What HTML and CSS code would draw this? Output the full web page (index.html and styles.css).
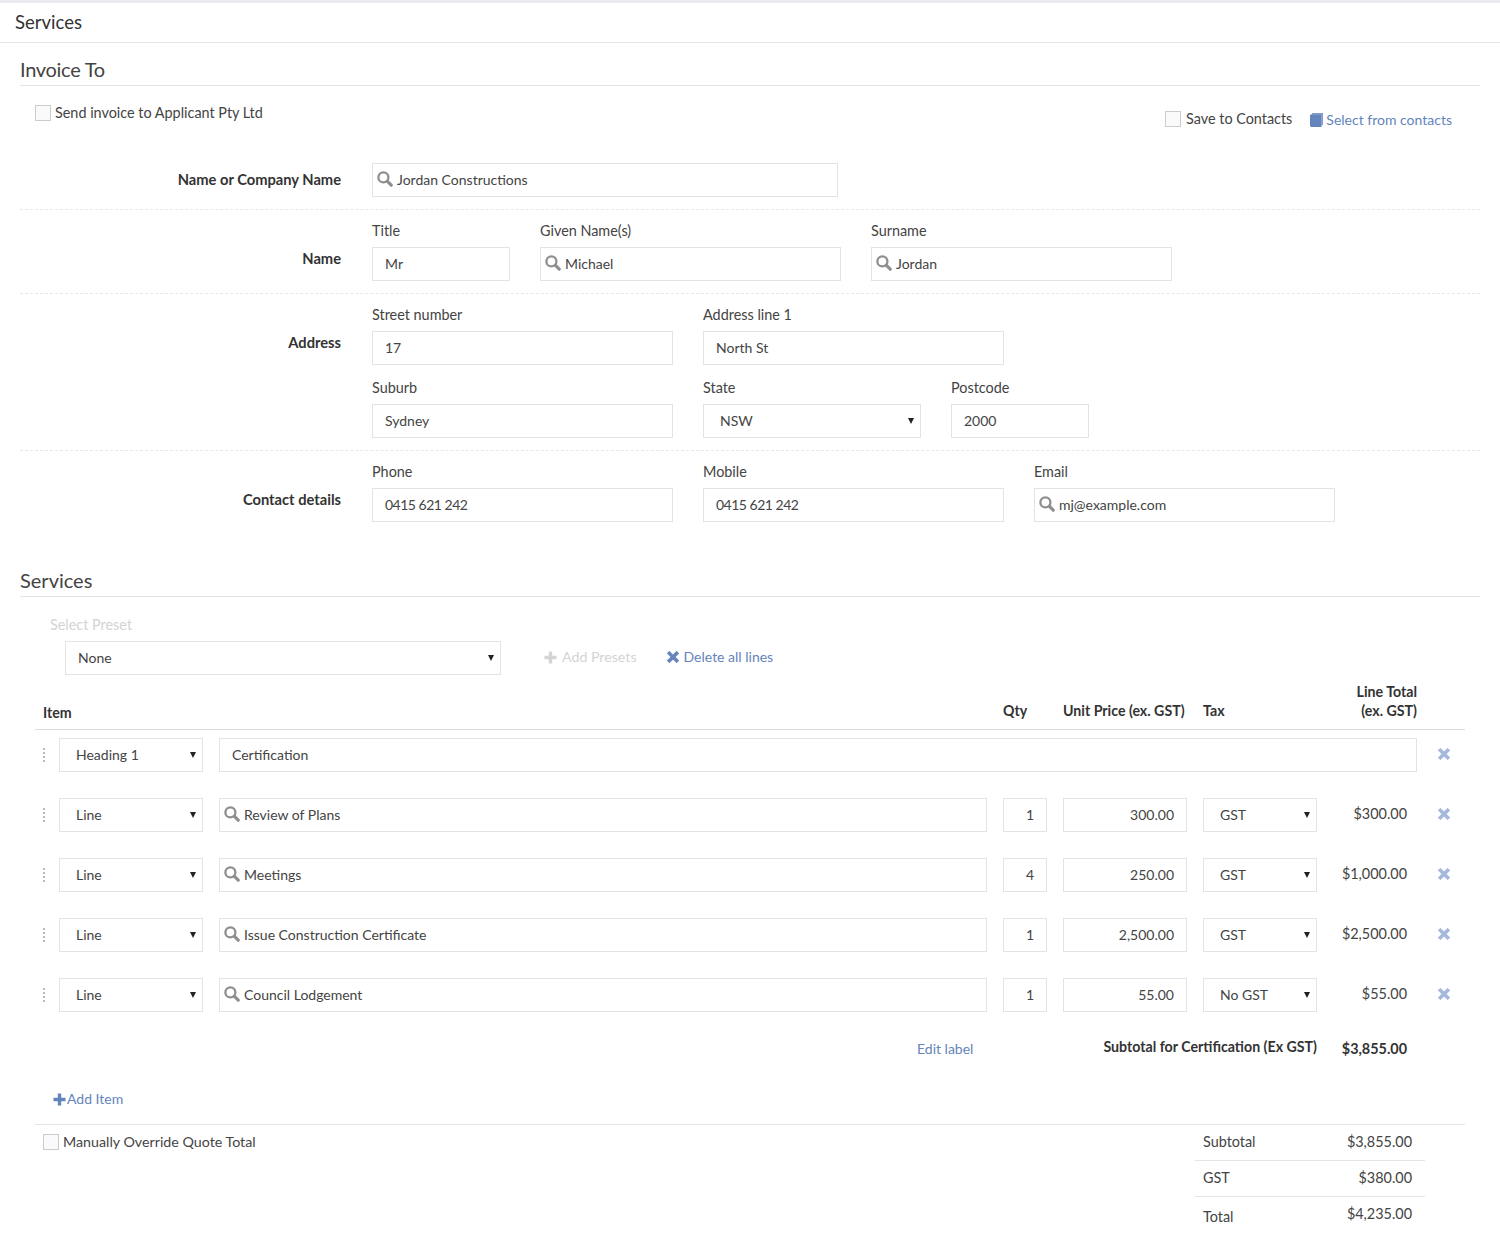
FILE: index.html
```html
<!DOCTYPE html>
<html lang="en">
<head>
<meta charset="utf-8">
<title>Services</title>
<link rel="stylesheet" href="styles.css">
</head>
<body>
<svg class="defs" width="0" height="0" aria-hidden="true">
  <symbol id="i-search" viewBox="0 0 16 16"><circle cx="6.4" cy="6.4" r="5" fill="none" stroke="currentColor" stroke-width="2.3"/><path d="M10.2 10.2 14.2 14.2" fill="none" stroke="currentColor" stroke-width="3.2" stroke-linecap="round"/></symbol>
  <symbol id="i-x" viewBox="0 0 12 12"><path d="M2.4 2.4 9.6 9.6M9.6 2.4 2.4 9.6" fill="none" stroke="currentColor" stroke-width="3.6" stroke-linecap="square"/></symbol>
  <symbol id="i-plus" viewBox="0 0 13 13"><path d="M6.5 0.5V12.5M0.5 6.5H12.5" fill="none" stroke="currentColor" stroke-width="3.4"/></symbol>
</svg>
<header class="page-title">Services</header>
<main class="content">
  <h2 class="section-title invoice">Invoice To</h2>
  <div class="options">
    <label class="check"><span class="box"></span>Send invoice to Applicant Pty Ltd</label>
    <div class="options-right">
      <label class="check roomy"><span class="box"></span>Save to Contacts</label>
      <a class="link contacts"><svg class="book" viewBox="0 0 13 14"><path d="M2 0H13V12H11.6V1.4H2Z" fill="#7f9bcb"/><path d="M0 2 1.6 1.2H11.6V14H1.4C.6 14 0 13.4 0 12.6Z" fill="#6484bc"/></svg>Select from contacts</a>
    </div>
  </div>

  <section class="form-row first">
    <div class="row-label">Name or Company Name</div>
    <div class="row-fields">
      <div class="line">
        <div class="field search w466"><svg class="ico"><use href="#i-search"/></svg>Jordan Constructions</div>
      </div>
    </div>
  </section>

  <section class="form-row">
    <div class="row-label">Name</div>
    <div class="row-fields">
      <div class="line">
        <div class="group"><div class="cap">Title</div><div class="field w138">Mr</div></div>
        <div class="group"><div class="cap">Given Name(s)</div><div class="field search w301"><svg class="ico"><use href="#i-search"/></svg>Michael</div></div>
        <div class="group"><div class="cap">Surname</div><div class="field search w301"><svg class="ico"><use href="#i-search"/></svg>Jordan</div></div>
      </div>
    </div>
  </section>

  <section class="form-row">
    <div class="row-label">Address</div>
    <div class="row-fields stack">
      <div class="line">
        <div class="group"><div class="cap">Street number</div><div class="field w301">17</div></div>
        <div class="group"><div class="cap">Address line 1</div><div class="field w301">North St</div></div>
      </div>
      <div class="line">
        <div class="group"><div class="cap">Suburb</div><div class="field w301">Sydney</div></div>
        <div class="group"><div class="cap">State</div><div class="field select w218">NSW<span class="caret"></span></div></div>
        <div class="group"><div class="cap">Postcode</div><div class="field w138">2000</div></div>
      </div>
    </div>
  </section>

  <section class="form-row last">
    <div class="row-label">Contact details</div>
    <div class="row-fields">
      <div class="line">
        <div class="group"><div class="cap">Phone</div><div class="field w301 tight">0415 621 242</div></div>
        <div class="group"><div class="cap">Mobile</div><div class="field w301 tight">0415 621 242</div></div>
        <div class="group"><div class="cap">Email</div><div class="field search w301"><svg class="ico"><use href="#i-search"/></svg>mj@example.com</div></div>
      </div>
    </div>
  </section>

  <h2 class="section-title services">Services</h2>
  <div class="cap preset-cap">Select Preset</div>
  <div class="preset">
    <div class="field select w436">None<span class="caret"></span></div>
    <a class="muted add-presets"><svg class="plus"><use href="#i-plus"/></svg>Add Presets</a>
    <a class="link delete-all"><svg class="x"><use href="#i-x"/></svg>Delete all lines</a>
  </div>

  <div class="table">
    <div class="thead">
      <div class="th item-th">Item</div>
      <div class="th">Qty</div>
      <div class="th">Unit Price (ex. GST)</div>
      <div class="th">Tax</div>
      <div class="th right">Line Total<br>(ex. GST)</div>
    </div>
    <div class="rows">
      <div class="row">
        <span class="drag"></span>
        <div class="cells">
          <div class="field select">Heading 1<span class="caret"></span></div>
          <div class="field wide">Certification</div>
          <svg class="x remove"><use href="#i-x"/></svg>
        </div>
      </div>
      <div class="row">
        <span class="drag"></span>
        <div class="cells">
          <div class="field select">Line<span class="caret"></span></div>
          <div class="field search"><svg class="ico"><use href="#i-search"/></svg>Review of Plans</div>
          <div class="field num">1</div>
          <div class="field num">300.00</div>
          <div class="field select">GST<span class="caret"></span></div>
          <div class="amount">$300.00</div>
          <svg class="x remove"><use href="#i-x"/></svg>
        </div>
      </div>
      <div class="row">
        <span class="drag"></span>
        <div class="cells">
          <div class="field select">Line<span class="caret"></span></div>
          <div class="field search"><svg class="ico"><use href="#i-search"/></svg>Meetings</div>
          <div class="field num">4</div>
          <div class="field num">250.00</div>
          <div class="field select">GST<span class="caret"></span></div>
          <div class="amount">$1,000.00</div>
          <svg class="x remove"><use href="#i-x"/></svg>
        </div>
      </div>
      <div class="row">
        <span class="drag"></span>
        <div class="cells">
          <div class="field select">Line<span class="caret"></span></div>
          <div class="field search"><svg class="ico"><use href="#i-search"/></svg>Issue Construction Certificate</div>
          <div class="field num">1</div>
          <div class="field num">2,500.00</div>
          <div class="field select">GST<span class="caret"></span></div>
          <div class="amount">$2,500.00</div>
          <svg class="x remove"><use href="#i-x"/></svg>
        </div>
      </div>
      <div class="row">
        <span class="drag"></span>
        <div class="cells">
          <div class="field select">Line<span class="caret"></span></div>
          <div class="field search"><svg class="ico"><use href="#i-search"/></svg>Council Lodgement</div>
          <div class="field num">1</div>
          <div class="field num">55.00</div>
          <div class="field select">No GST<span class="caret"></span></div>
          <div class="amount">$55.00</div>
          <svg class="x remove"><use href="#i-x"/></svg>
        </div>
      </div>
    </div>

    <div class="subtotal">
      <a class="link edit-label">Edit label</a>
      <div class="sub-label">Subtotal for Certification (Ex GST)</div>
      <div class="sub-value">$3,855.00</div>
    </div>

    <a class="link add-item"><svg class="plus"><use href="#i-plus"/></svg>Add Item</a>

    <div class="footer">
      <label class="check override"><span class="box"></span>Manually Override Quote Total</label>
      <div class="totals">
        <div class="t-row"><span>Subtotal</span><span>$3,855.00</span></div>
        <div class="t-row"><span>GST</span><span>$380.00</span></div>
        <div class="t-row grand"><span class="t-low">Total</span><span>$4,235.00</span></div>
      </div>
    </div>
  </div>
</main>
</body>
</html>
```
FILE: styles.css
```css
* { box-sizing: border-box; }
html, body { margin: 0; padding: 0; }
body {
  font-family: "Lato", "Liberation Sans", sans-serif;
  font-size: 14.4px;
  line-height: 20px;
  color: #444;
  background: #fff;
  border-top: 3px solid #e9ebee;
}
.defs { position: absolute; }
.page-title {
  height: 40px;
  padding: 9px 0 0 15px;
  font-size: 18.5px;
  color: #333;
  border-bottom: 1px solid #e6e6e6;
}
.content { padding: 0 20px; }
.section-title {
  margin: 0;
  height: 43px;
  padding-top: 15px;
  font-size: 20px;
  line-height: 22px;
  font-weight: 400;
  color: #444;
  border-bottom: 1px solid #e3e3e3;
}
.section-title.invoice { letter-spacing: -.3px; }
.section-title.services { margin-top: 32px; }

.options {
  display: flex;
  justify-content: space-between;
  align-items: flex-start;
  height: 77px;
  padding: 19px 28px 0 15px;
}
.options-right { display: flex; gap: 18px; padding-top: 6px; }
.check { display: flex; align-items: center; gap: 4px; height: 16px; }
.check.roomy { gap: 5px; margin-left: -1px; }
.check.override { font-size: 14.25px; }
.box {
  width: 16px;
  height: 16px;
  background: #fafafa;
  border: 1px solid #ccc;
}
.link { color: #6484bc; display: inline-flex; align-items: center; font-size: 14px; }
.contacts { gap: 3px; height: 20px; margin-top: -1px; }
.book { width: 13px; height: 14px; margin-top: -1px; }

.form-row {
  display: grid;
  grid-template-columns: 321px 1fr;
  column-gap: 31px;
  padding: 13px 0 12px;
  border-bottom: 1px dashed #e8e8e8;
}
.form-row.first { padding-top: 0; }
.form-row.last { border-bottom: 0; padding-bottom: 0; }
.row-label {
  text-align: right;
  font-size: 14.7px;
  font-weight: 700;
  color: #333;
  padding-top: 25px;
}
.form-row.first .row-label { padding-top: 6px; }
.row-fields { display: flex; flex-direction: column; gap: 15px; }
.line { display: flex; gap: 30px; }
.cap { height: 16px; line-height: 16px; margin-bottom: 8px; color: #444; }

.field {
  position: relative;
  display: flex;
  align-items: center;
  height: 34px;
  padding: 0 12px;
  background: #fff;
  border: 1px solid #e3e3e3;
  color: #444;
  font-size: 14px;
  white-space: nowrap;
}
.field.search { padding-left: 4px; }
.field.select { padding-left: 16px; }
.field.num { justify-content: flex-end; }
.field.tight { letter-spacing: -.5px; }
.ico { width: 16px; height: 16px; margin: -3px 4px 0 0; color: #8f8f8f; flex: none; }
.caret {
  position: absolute;
  right: 6px;
  top: 13px;
  width: 0;
  height: 0;
  border-left: 3px solid transparent;
  border-right: 3px solid transparent;
  border-top: 6px solid #222;
}
.w138 { width: 138px; }
.w218 { width: 218px; }
.w301 { width: 301px; }
.w436 { width: 436px; padding-left: 12px !important; }
.w466 { width: 466px; }

.preset-cap { margin: 20px 0 8px 30px; color: #d4d4d4; }
.preset { display: flex; align-items: center; padding-left: 45px; }
.muted { color: #d4d4d4; display: inline-flex; align-items: center; font-size: 14.2px; }
.add-presets { margin-left: 43px; gap: 5px; margin-top: -2px; }
.delete-all { margin-left: 30px; gap: 5px; margin-top: -2px; }
.plus { width: 13px; height: 13px; }
.x { width: 12px; height: 12px; flex: none; }

.table { padding: 0 15px; }
.thead {
  display: grid;
  grid-template-columns: 944px 44px 124px 114px 84px 32px;
  column-gap: 16px;
  align-items: end;
  margin-top: 7px;
  padding: 0 0 9px 8px;
  border-bottom: 1px solid #dcdcdc;
}
.th { font-size: 14.2px; font-weight: 700; color: #333; line-height: 19px; white-space: nowrap; }
.th.right { text-align: right; }
.item-th { margin-bottom: -2px; }

.rows { display: flex; flex-direction: column; gap: 26px; margin-top: 8px; }
.row { display: flex; align-items: center; padding-left: 8px; }
.drag {
  width: 2px;
  height: 14px;
  margin-right: 14px;
  background: repeating-linear-gradient(to bottom, #bbb 0 2px, transparent 2px 4px);
}
.cells {
  flex: 1;
  display: grid;
  grid-template-columns: 144px 768px 44px 124px 114px 84px 32px;
  column-gap: 16px;
  align-items: center;
}
.wide { grid-column: 2 / span 5; }
.amount { text-align: right; padding-right: 10px; margin-top: -2px; }
.remove { color: #a4b9dc; margin: -2px 0 0 5px; }

.subtotal {
  display: flex;
  align-items: center;
  height: 24px;
  margin-top: 25px;
}
.edit-label { margin-left: 882px; }
.sub-label { margin-left: auto; font-size: 14.2px; font-weight: 700; color: #333; margin-top: -4px; white-space: nowrap; }
.sub-value { width: 90px; text-align: right; margin-right: 58px; font-weight: 700; color: #333; }

.add-item { display: flex; gap: 1px; margin: 28px 0 0 18px; }

.footer {
  display: flex;
  justify-content: space-between;
  align-items: flex-start;
  margin-top: 15px;
  padding: 0 40px 0 8px;
  border-top: 1px solid #e6e6e6;
}
.footer .check { margin-top: 9px; }
.totals { width: 230px; }
.t-row {
  display: flex;
  justify-content: space-between;
  height: 36px;
  padding: 7px 13px 0 8px;
  border-bottom: 1px solid #e6e6e6;
}
.t-row.grand { border-bottom: 0; }
.t-low { padding-top: 3px; }
```
